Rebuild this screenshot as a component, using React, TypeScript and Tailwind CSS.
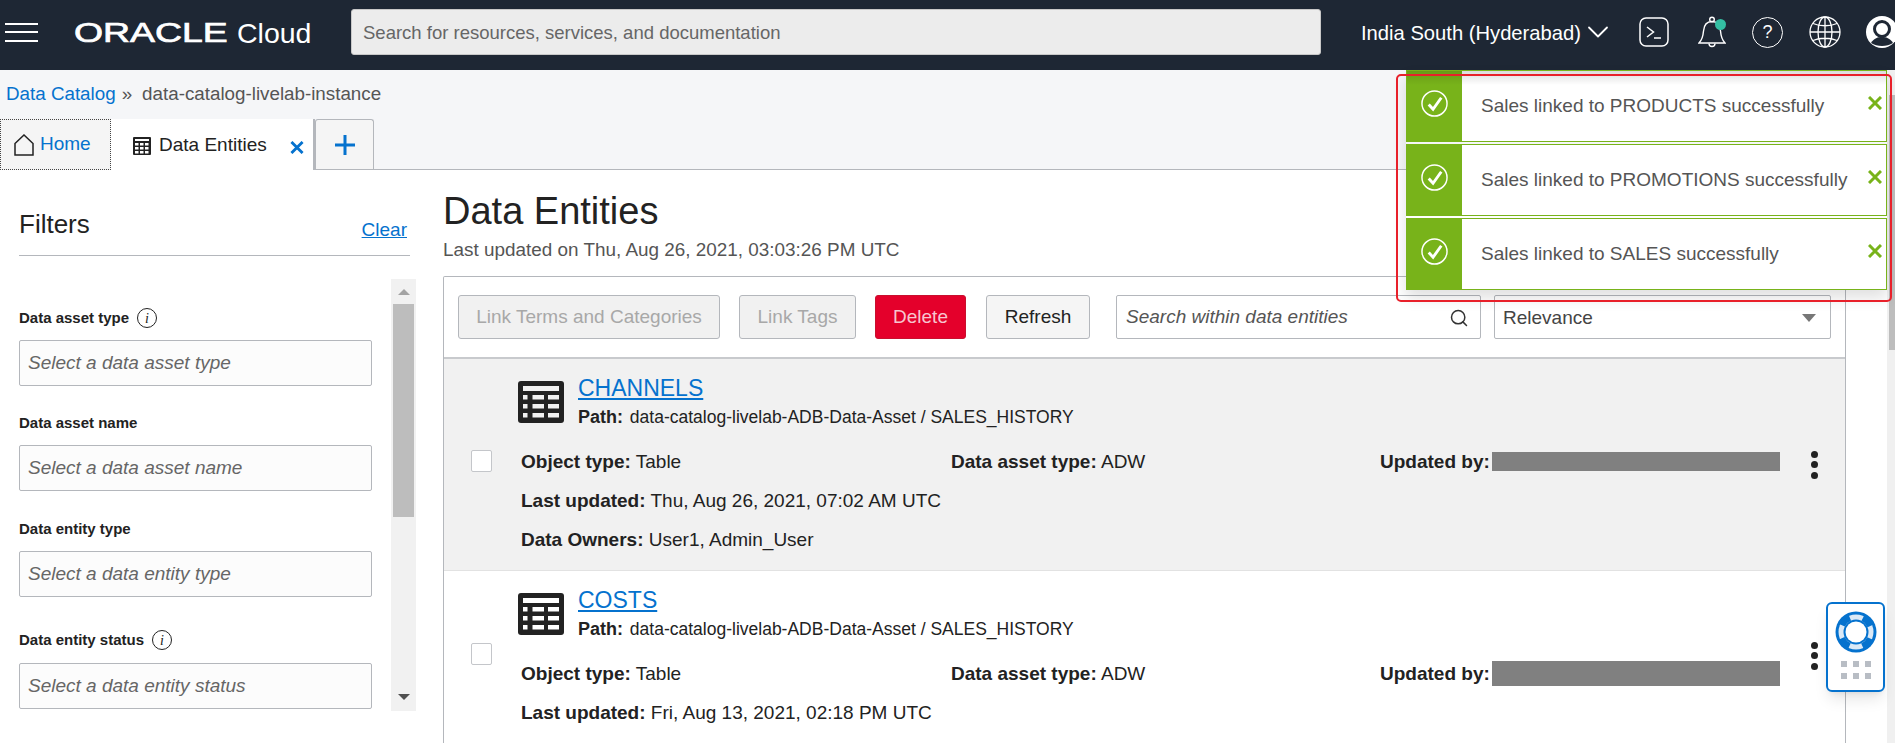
import { ChevronDown, Search } from "lucide-react";

const filters = [
    { label: "Data asset type", placeholder: "Select a data asset type", info: true, top: "mt-[29px]", gap: "mt-[12px]" },
    { label: "Data asset name", placeholder: "Select a data asset name", info: false, top: "mt-[27px]", gap: "mt-[12px]" },
    { label: "Data entity type", placeholder: "Select a data entity type", info: false, top: "mt-[28px]", gap: "mt-[12px]" },
    { label: "Data entity status", placeholder: "Select a data entity status", info: true, top: "mt-[33px]", gap: "mt-[13px]" },
];

const toasts = ["PRODUCTS", "PROMOTIONS", "SALES"];

const XMark = ({ className }: { className: string }) => (
    <svg viewBox="0 0 14 14" className={className} fill="none" stroke="currentColor" strokeWidth="3">
        <path d="M1 1l12 12M13 1L1 13" />
    </svg>
);

const TableIcon = ({ className }: { className: string }) => (
    <svg viewBox="0 0 46 42" className={className}>
        <rect width="46" height="42" rx="3" fill="#222" />
        <g fill="currentColor">
            <rect x="5" y="5" width="36" height="5" />
            {[14, 23, 32].flatMap((y) =>
                [5, 14.5, 30].map((x, i) => (
                    <rect key={`${x}-${y}`} x={x} y={y} width={i === 0 ? 4.5 : i === 1 ? 11.5 : 11} height="4.5" />
                )),
            )}
        </g>
    </svg>
);

const InfoIcon = () => (
    <span className="ml-2 flex h-5 w-5 items-center justify-center rounded-full border border-[#222] font-['Liberation_Serif',serif] text-[14px] font-normal italic text-[#222]">
        i
    </span>
);

const Row = ({
    name,
    updated,
    owners,
    selected,
    checkTop,
    dotsPos,
    barHeight,
}: {
    name: string;
    updated: string;
    owners?: string;
    selected?: boolean;
    checkTop: string;
    dotsPos: string;
    barHeight: string;
}) => (
    <div className={`flex pt-[14px] ${selected ? "h-[211px] bg-[#f1f1f1]" : "bg-white"}`}>
        <div className="w-[74px] shrink-0">
            <div className={`ml-[27px] h-[22px] w-[21px] rounded-[2px] border border-[#c4c6ca] bg-white ${checkTop}`} />
        </div>
        <div className="flex-1">
            <div className="flex">
                <TableIcon className={`mt-[8px] h-[42px] w-[46px] ${selected ? "text-[#f1f1f1]" : "text-white"}`} />
                <div className="ml-[14px]">
                    <a className="block text-[23px] leading-[30px] text-[#0572ce] underline">{name}</a>
                    <p className="text-[17.5px] leading-[28px] text-[#222]">
                        <b className="mr-[2px] text-[18px]">Path:</b> data-catalog-livelab-ADB-Data-Asset / SALES_HISTORY
                    </p>
                </div>
            </div>
            <div className="ml-[3px] mt-[11px] grid grid-cols-[430px_429px_1fr] text-[19px] leading-[39px] text-[#222]">
                <p><b>Object type:</b> Table</p>
                <p><b>Data asset type:</b> ADW</p>
                <div className="flex items-center">
                    <b className="w-[108px] whitespace-nowrap">Updated by:</b>
                    <span className={`ml-[4px] w-[288px] bg-[#808080] ${barHeight}`} />
                    <span className={`ml-[31px] flex flex-col gap-[3.5px] ${dotsPos}`}>
                        <i className="h-[7px] w-[7px] rounded-full bg-[#222]" />
                        <i className="h-[7px] w-[7px] rounded-full bg-[#222]" />
                        <i className="h-[7px] w-[7px] rounded-full bg-[#222]" />
                    </span>
                </div>
                <p className="col-span-3"><b>Last updated:</b> {updated}</p>
                {owners && <p className="col-span-3"><b>Data Owners:</b> {owners}</p>}
            </div>
        </div>
    </div>
);

export default function App() {
    return (
        <div className="relative flex h-[743px] w-[1895px] flex-col overflow-hidden bg-white font-['Liberation_Sans',Arial,sans-serif]">
            <header className="flex h-[70px] shrink-0 items-center bg-[#1e2734] pb-[6px] text-white [&>*]:shrink-0">
                <div className="ml-[5px] flex w-[33px] flex-col gap-[6.5px]">
                    <i className="h-[2px] bg-white" />
                    <i className="h-[2px] bg-white" />
                    <i className="h-[2px] bg-white" />
                </div>
                <span className="ml-[36px] mt-[2px] w-[163px] origin-left scale-x-[1.385] text-[27px] leading-none [-webkit-text-stroke:0.7px_white]">ORACLE</span>
                <span className="mt-[2px] w-[75px] text-[28.5px] leading-none">Cloud</span>
                <div className="ml-[39px] flex h-[46px] w-[970px] items-center rounded-[3px] border border-[#c8c8c8] bg-[#ececec] pl-[11px] pt-[2px] text-[18.5px] text-[#666]">
                    Search for resources, services, and documentation
                </div>
                <span className="ml-[40px] mt-[2px] w-[221px] whitespace-nowrap text-[20.2px]">India South (Hyderabad)</span>
                <ChevronDown className="-ml-[2px] h-[36px] w-[36px]" strokeWidth={1.2} />
                <svg viewBox="0 0 30 30" className="ml-[23px] h-[30px] w-[30px]" fill="none" stroke="#fff" strokeWidth="1.5">
                    <rect x="1" y="1" width="28" height="28" rx="6" />
                    <path d="M8 10l6.500 5L8 20M15 21h7" />
                </svg>
                <div className="relative ml-[29px] h-[32px] w-[28px]">
                    <svg viewBox="0 0 28 32" className="h-[32px] w-[28px]" fill="none" stroke="#fff" strokeWidth="1.4">
                        <path d="M1 27c3-3 4-6 4.500-12C6 9 9 5.500 14 5.500S22 9 22.500 15C23 21 24 24 27 27z" />
                        <circle cx="14" cy="3.500" r="2.300" />
                        <path d="M11 27.500a3 3 0 0 0 6 0" />
                    </svg>
                    <i className="absolute right-[0px] top-[3px] h-[11px] w-[11px] rounded-full bg-[#34bfa3]" />
                </div>
                <div className="ml-[26px] flex h-[31px] w-[31px] items-center justify-center rounded-full border-[1.5px] border-white text-[18px]">?</div>
                <svg viewBox="0 0 32 32" className="ml-[26px] h-[32px] w-[32px]" fill="none" stroke="#fff" strokeWidth="1.3">
                    <circle cx="16" cy="16" r="15" />
                    <ellipse cx="16" cy="16" rx="7" ry="15" />
                    <path d="M16 1v30M1 16h30M4 7.500c7 3 17 3 24 0M4 24.500c7-3 17-3 24 0" />
                </svg>
                <svg viewBox="0 0 32 32" className="ml-[25px] h-[32px] w-[32px]">
                    <circle cx="16" cy="16" r="16" fill="#fff" />
                    <circle cx="16" cy="13" r="7.500" fill="#fff" stroke="#1e2734" strokeWidth="3" />
                    <path d="M5 27c3-5 7-6 11-6s8 1 11 6c-6 4-16 4-22 0z" fill="#1e2734" />
                </svg>
            </header>

            <div className="h-[100px] shrink-0 border-b border-[#b4b7bc] bg-[#f5f6f8]">
                <div className="flex h-[49px] items-center pl-[6px] text-[18.8px] text-[#555]">
                    <a className="text-[#0572ce]">Data Catalog</a>
                    <span className="ml-[6px]">»</span>
                    <span className="ml-[10px]">data-catalog-livelab-instance</span>
                </div>
                <div className="flex h-[51px] text-[18px]">
                    <div className="flex w-[111px] items-center border border-dotted border-[#444] bg-[#f5f5f5] pl-[13px] text-[19px] text-[#0572ce]">
                        <svg viewBox="0 0 20 22" className="mr-[6px] h-[22px] w-[20px]" fill="none" stroke="#222" strokeWidth="1.5">
                            <path d="M1 9.500L10 1l9 8.500V21H1z" />
                        </svg>
                        Home
                    </div>
                    <div className="flex w-[204px] items-center border-r-2 border-[#b4b7bc] bg-white pl-[22px] pt-[2px] text-[19px] text-[#222]">
                        <svg viewBox="0 0 18 18" className="mr-[8px] h-[18px] w-[18px]">
                            <rect width="18" height="18" rx="1" fill="#222" />
                            <g fill="#fff">
                                <rect x="2" y="2" width="14" height="2" />
                                {[6, 10, 14].flatMap((y) =>
                                    [2, 7, 12].map((x) => <rect key={`${x}-${y}`} x={x} y={y} width="3.500" height="2.500" />),
                                )}
                            </g>
                        </svg>
                        <span className="w-[106px] whitespace-nowrap">Data Entities</span>
                        <XMark className="ml-[25px] mt-[4px] h-[13px] w-[14px] text-[#0572ce]" />
                    </div>
                    <div className="flex h-[50px] w-[59px] items-center justify-center rounded-t-[3px] border border-b-0 border-[#b4b7bc] bg-[#f5f5f5]">
                        <svg viewBox="0 0 20 20" className="h-[20px] w-[20px]" fill="#0572ce">
                            <rect x="8.500" width="3" height="20" />
                            <rect y="8.500" width="20" height="3" />
                        </svg>
                    </div>
                </div>
            </div>

            <div className="flex min-h-0 flex-1">
                <aside className="w-[443px] shrink-0">
                    <div className="ml-[19px] flex h-[86px] w-[391px] items-end justify-between border-b border-[#b4b7bc] pb-[14px]">
                        <h2 className="mb-[-1px] text-[26px] leading-[36px] text-[#222]">Filters</h2>
                        <a className="mb-[-1px] mr-[3px] text-[19px] leading-[24px] text-[#0572ce] underline">Clear</a>
                    </div>
                    <div className="ml-[19px] mt-[23px] flex h-[432px] w-[397px] justify-between">
                        <div className="w-[353px]">
                            {filters.map((f) => (
                                <div key={f.label} className={f.top}>
                                    <div className="flex h-[20px] items-center text-[15px] font-bold text-[#222]">
                                        {f.label}
                                        {f.info && <InfoIcon />}
                                    </div>
                                    <div className={`flex h-[46px] items-center rounded-[2px] border border-[#b4b7bc] bg-[#fcfcfc] pl-[8px] text-[19px] italic text-[#666] ${f.gap}`}>
                                        {f.placeholder}
                                    </div>
                                </div>
                            ))}
                        </div>
                        <div className="flex w-[25px] flex-col items-center bg-[#f1f1f1] px-[2px]">
                            <div className="flex h-[25px] items-center">
                                <i className="border-x-[6px] border-b-[6px] border-x-transparent border-b-[#a3a3a3]" />
                            </div>
                            <div className="h-[213px] w-full bg-[#bdbdbd]" />
                            <div className="flex-1" />
                            <div className="flex h-[28px] items-center">
                                <i className="border-x-[6px] border-t-[6px] border-x-transparent border-t-[#505050]" />
                            </div>
                        </div>
                    </div>
                </aside>

                <main className="w-[1403px] shrink-0">
                    <div className="h-[106px] pt-[17px]">
                        <h1 className="text-[38px] leading-[48px] text-[#222]">Data Entities</h1>
                        <p className="mt-[3px] text-[18.9px] leading-[24px] text-[#555]">Last updated on Thu, Aug 26, 2021, 03:03:26 PM UTC</p>
                    </div>
                    <div className="h-[500px] rounded-t-[2px] border-x border-t border-[#b4b7bc]">
                        <div className="flex h-[82px] items-start border-b-2 border-[#c8cacd] pl-[14px] pt-[18px] text-[19px]">
                            <button className="h-[44px] w-[262px] rounded-[3px] border border-[#b4b7bc] bg-[#f1f1f1] pt-[1px] text-[#a8a8a8]">Link Terms and Categories</button>
                            <button className="ml-[19px] h-[44px] w-[117px] rounded-[3px] border border-[#b4b7bc] bg-[#f1f1f1] pt-[1px] text-[#a8a8a8]">Link Tags</button>
                            <button className="ml-[19px] h-[44px] w-[91px] rounded-[3px] border border-[#c8102e] bg-[#e4002b] pt-[1px] text-[#f7c6cf]">Delete</button>
                            <button className="ml-[20px] h-[44px] w-[104px] rounded-[3px] border border-[#b4b7bc] bg-[#f5f5f5] pt-[1px] text-[#222]">Refresh</button>
                            <div className="ml-[26px] flex h-[44px] w-[365px] items-center justify-between rounded-[2px] border border-[#b4b7bc] bg-white pl-[9px] pr-[11px] pt-[1px] italic text-[#555]">
                                Search within data entities
                                <Search className="h-[20px] w-[20px] text-[#333]" strokeWidth={1.8} />
                            </div>
                            <div className="ml-[13px] flex h-[44px] w-[337px] items-center justify-between rounded-[2px] border border-[#b4b7bc] bg-white pl-[8px] pr-[14px] pt-[2px] text-[#444]">
                                Relevance
                                <i className="border-x-[7px] border-t-[8px] border-x-transparent border-t-[#777]" />
                            </div>
                        </div>
                        <Row
                            name="CHANNELS"
                            updated="Thu, Aug 26, 2021, 07:02 AM UTC"
                            owners="User1, Admin_User"
                            selected
                            checkTop="mt-[77px]"
                            dotsPos="mt-[6px]"
                            barHeight="h-[19px]"
                        />
                        <div className="h-px bg-[#e2e2e2]" />
                        <Row
                            name="COSTS"
                            updated="Fri, Aug 13, 2021, 02:18 PM UTC"
                            checkTop="mt-[58px]"
                            dotsPos="-mt-[36px]"
                            barHeight="h-[25px]"
                        />
                    </div>
                </main>
            </div>

            {/* page scrollbar, partly under the toasts */}
            <div className="absolute bottom-0 left-[1887px] top-[70px] w-[8px] bg-[#f0f0f0] pl-[2px] pt-[25px]">
                <div className="h-[255px] bg-[#bdbdbd]" />
            </div>

            {/* toasts sit over the tab bar */}
            <div className="absolute left-[1406px] top-[70px] flex w-[481px] flex-col gap-[2px] shadow-[0_8px_14px_rgba(0,0,0,0.12)]">
                {toasts.map((t, i) => (
                    <div key={t} className="relative flex h-[72px] border border-[#78b31a] bg-white">
                        {i === 0 && <div className="absolute inset-x-0 top-0 h-[14px] bg-gradient-to-b from-[#00000024] to-transparent" />}
                        <div className="flex w-[55px] items-start justify-center bg-[#78b31a] pt-[19px]">
                            <svg viewBox="0 0 28 28" className="h-[27px] w-[27px]" fill="none" stroke="#fff">
                                <circle cx="14" cy="14" r="13" strokeWidth="1.5" />
                                <path d="M8 15l4.500 5L21 8" strokeWidth="3" />
                            </svg>
                        </div>
                        <p className="ml-[19px] flex-1 whitespace-nowrap pt-[23px] text-[19px] leading-[24px] text-[#555]">Sales linked to {t} successfully</p>
                        <XMark className="mr-[4px] mt-[25px] h-[14px] w-[14px] text-[#78b31a]" />
                    </div>
                ))}
            </div>
            <div className="absolute left-[1396px] top-[74px] h-[228px] w-[496px] rounded-[5px] border-2 border-[#e8202a]" />

            <div className="absolute left-[1826px] top-[602px] flex h-[90px] w-[59px] flex-col items-center rounded-[6px] border-2 border-[#0572ce] bg-white pt-[7px] shadow-lg">
                <svg viewBox="0 0 42 42" className="h-[42px] w-[42px]">
                    <circle cx="21" cy="21" r="20.500" fill="#0572ce" />
                    <circle cx="21" cy="21" r="17.500" fill="#dbe9f6" strokeWidth="0" />
                    <circle cx="21" cy="21" r="15.500" fill="none" stroke="#0572ce" strokeWidth="6" strokeDasharray="11 13.350" strokeDashoffset="-6.600" />
                    <circle cx="21" cy="21" r="12.500" fill="#0572ce" />
                    <circle cx="21" cy="21" r="10.500" fill="#fff" />
                </svg>
                <div className="mt-[8px] grid grid-cols-3 gap-x-[6px] gap-y-[6px]">
                    {[0, 1, 2, 3, 4, 5].map((i) => (
                        <i key={i} className="h-[6px] w-[6px] bg-[#b8bdc4]" />
                    ))}
                </div>
            </div>
        </div>
    );
}
